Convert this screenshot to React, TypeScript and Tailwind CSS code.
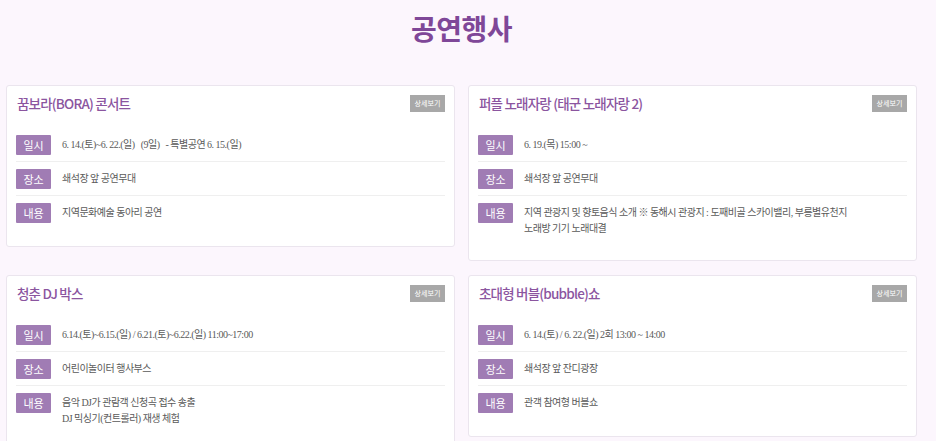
import React from "react";

type Ev = { title: string; date: string; place: string; content: string[] };

const events: Ev[] = [
  {
    title: "꿈보라(BORA) 콘서트",
    date: "6. 14.(토)~6. 22.(일)   (9일)   - 특별공연 6. 15.(일)",
    place: "쇄석장 앞 공연무대",
    content: ["지역문화예술 동아리 공연"],
  },
  {
    title: "퍼플 노래자랑 (태군 노래자랑 2)",
    date: "6. 19.(목) 15:00 ~",
    place: "쇄석장 앞 공연무대",
    content: [
      "지역 관광지 및 향토음식 소개 ※ 동해시 관광지 : 도째비골 스카이밸리, 부릉별유천지",
      "노래방 기기 노래대결",
    ],
  },
  {
    title: "청춘 DJ 박스",
    date: "6.14.(토)~6.15.(일) / 6.21.(토)~6.22.(일) 11:00~17:00",
    place: "어린이놀이터 행사부스",
    content: ["음악 DJ가 관람객 신청곡 접수 송출", "DJ 믹싱기(컨트롤러) 재생 체험"],
  },
  {
    title: "초대형 버블(bubble)쇼",
    date: "6. 14.(토) / 6. 22.(일) 2회 13:00 ~ 14:00",
    place: "쇄석장 앞 잔디광장",
    content: ["관객 참여형 버블쇼"],
  },
];

const sans = { fontFamily: '"Noto Sans CJK KR", "Noto Sans", sans-serif' };
const serif = { fontFamily: '"Liberation Serif", "Noto Sans CJK KR", serif' };

function Row({ label, lines, last }: { label: string; lines: string[]; last?: boolean }) {
  return (
    <div
      className={
        "flex items-start gap-[11px] pt-[7px] pb-[6px] " +
        (last ? "" : "border-b border-[#efefef]")
      }
    >
      <div
        className="w-[35px] h-[20px] shrink-0 bg-[#a07cb4] text-white text-[11px] flex items-center justify-center rounded-[1px]"
        style={sans}
      >
        {label}
      </div>
      <div
        className="pt-[2px] text-[10px] leading-[16px] tracking-[-0.5px] text-[#5a5a5a] whitespace-pre-wrap"
        style={serif}
      >
        {lines.map((l, i) => (
          <div key={i}>{l}</div>
        ))}
      </div>
    </div>
  );
}

function Card({ ev }: { ev: Ev }) {
  return (
    <div className="bg-white border border-[#ebe5ee] rounded-[3px] px-[9px] pt-[9px] pb-[17px]">
      <div className="flex items-center justify-between h-[17px] mb-[16px]">
        <div className="pl-[1px] text-[13.5px] font-medium text-[#8b559f] tracking-[-0.8px]" style={sans}>
          {ev.title}
        </div>
        <div
          className="w-[35px] h-[17px] bg-[#a8a8a8] text-white text-[7px] flex items-center justify-center"
          style={sans}
        >
          상세보기
        </div>
      </div>
      <Row label="일시" lines={[ev.date]} />
      <Row label="장소" lines={[ev.place]} />
      <Row label="내용" lines={ev.content} last />
    </div>
  );
}

export default function App() {
  return (
    <div className="min-h-[441px] bg-[#fcf6fd] overflow-hidden pl-[6px] pr-[19px]">
      <div className="h-[85px] pt-[11px]">
        <h1
          className="text-center text-[28px] leading-[34px] font-bold text-[#7f4798] tracking-[-0.5px]"
          style={sans}
        >
          공연행사
        </h1>
      </div>
      <div className="grid grid-cols-2 gap-x-[13px] gap-y-[14px] items-start">
        {events.map((ev, i) => (
          <Card key={i} ev={ev} />
        ))}
      </div>
    </div>
  );
}
